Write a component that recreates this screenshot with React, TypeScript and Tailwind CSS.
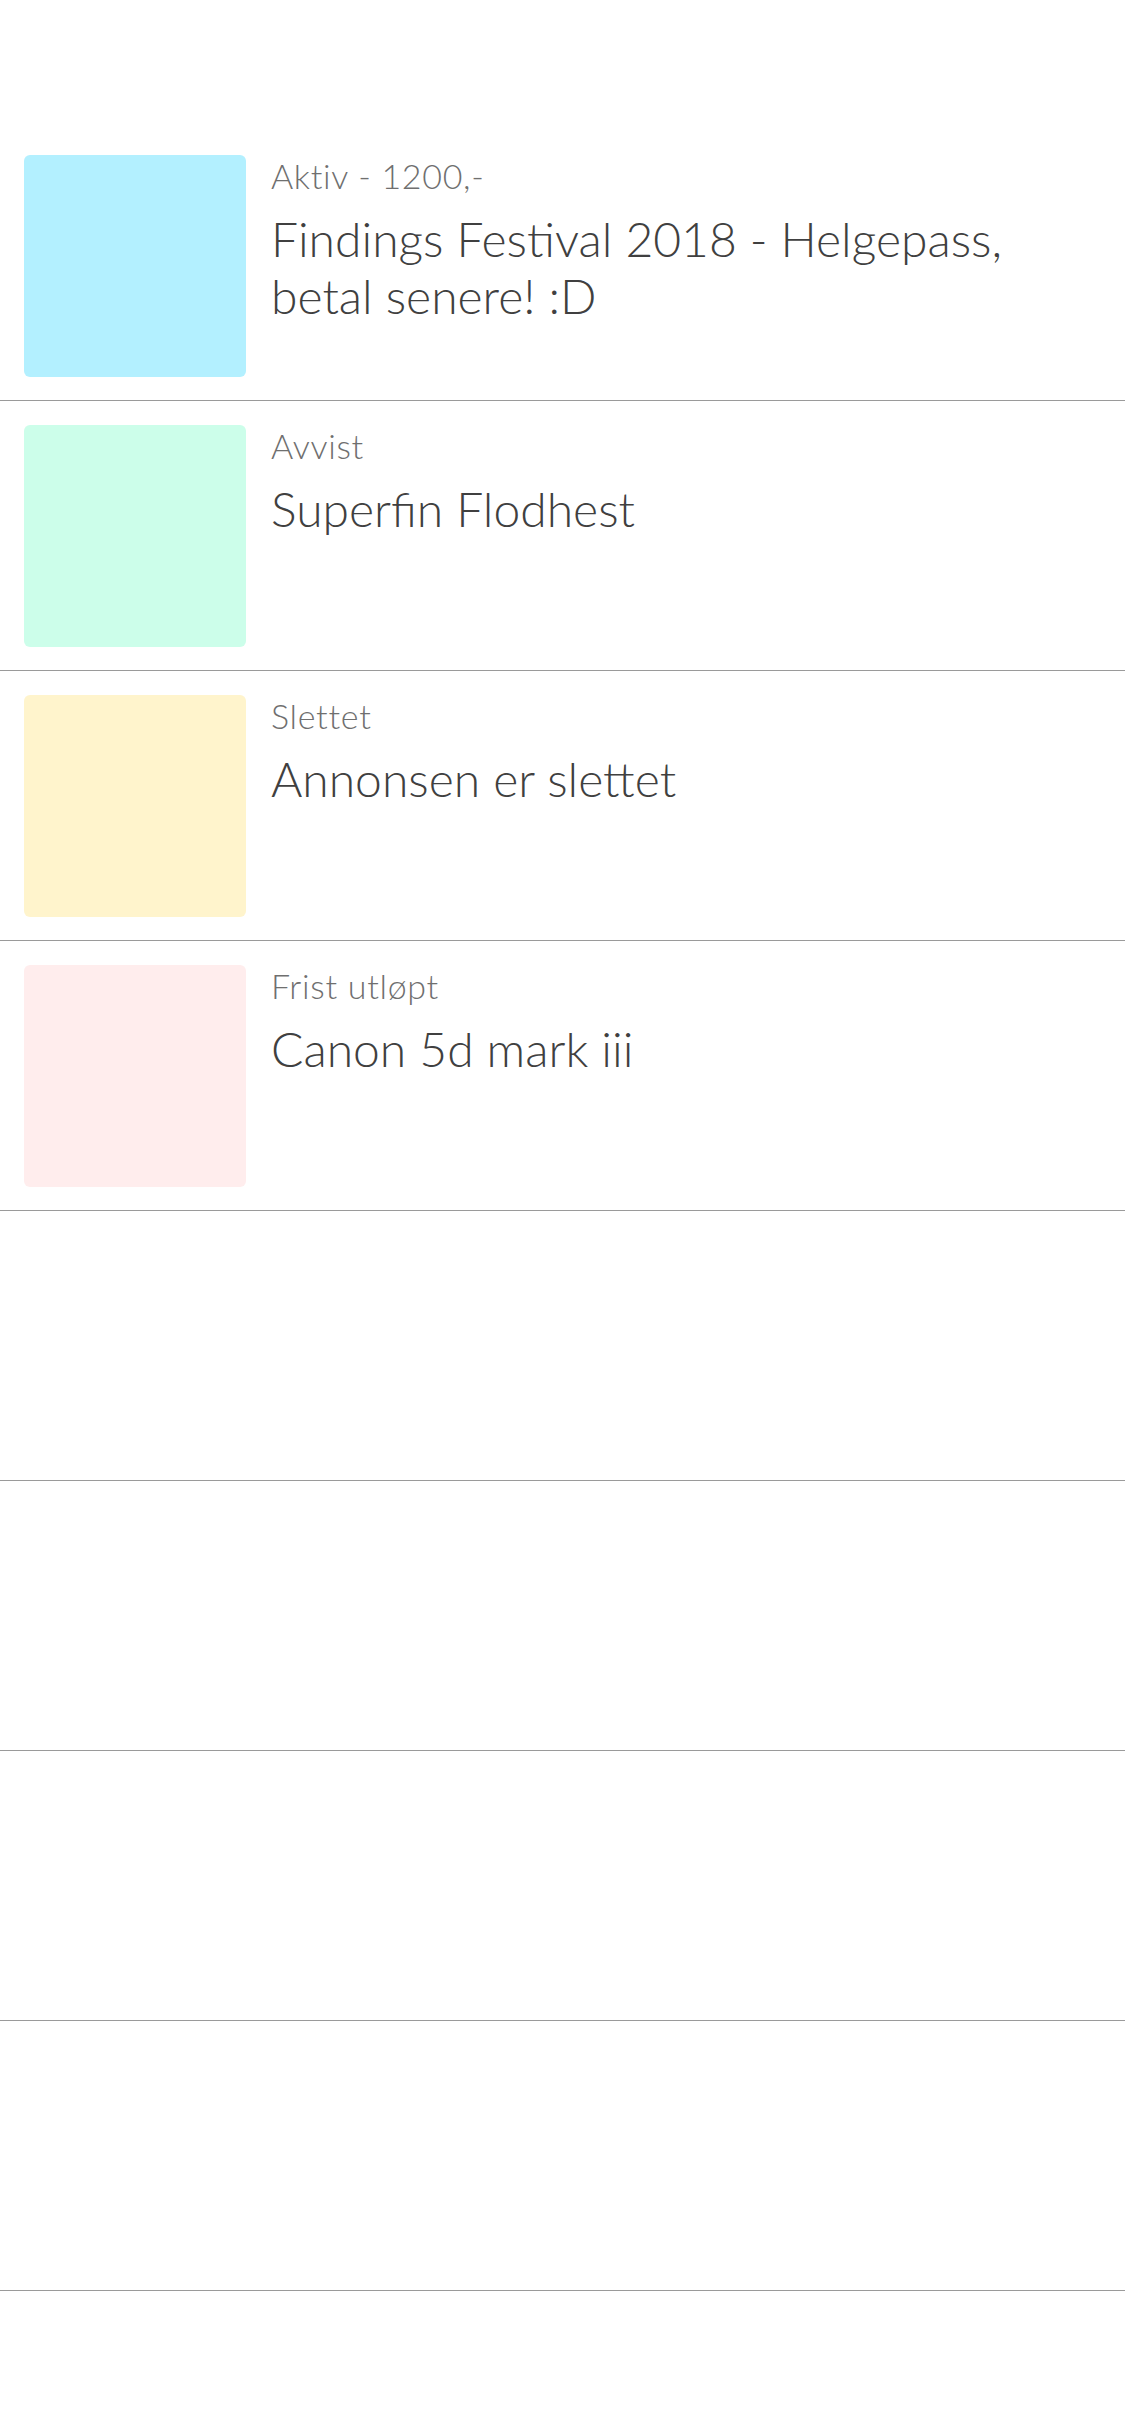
import React from "react";

type Ad = {
  id: string;
  status: string;
  title: string;
  color: string;
};

const ads: Ad[] = [
  { id: "1", status: "Aktiv - 1200,-", title: "Findings Festival 2018 - Helgepass, betal senere! :D", color: "bg-[#b3f0ff]" },
  { id: "2", status: "Avvist", title: "Superfin Flodhest", color: "bg-[#ccfeea]" },
  { id: "3", status: "Slettet", title: "Annonsen er slettet", color: "bg-[#fff4cc]" },
  { id: "4", status: "Frist utløpt", title: "Canon 5d mark iii", color: "bg-[#ffeded]" },
];

const AdRow = ({ ad }: { ad?: Ad }) => {
  return (
    <div className="h-[270px] border-b border-[#9a9a9a] flex items-start pl-[24px] pr-[24px] pt-[24px]">
      {ad && (
        <>
          <div className={`w-[222px] h-[222px] shrink-0 rounded-[6px] ${ad.color}`} />
          <div className="ml-[25px] flex-1 min-w-0">
            <div className="text-[34px] leading-[40px] tracking-[0.7px] font-light text-[#6f6f6f] mt-[1px]">
              {ad.status}
            </div>
            <div className="text-[48px] leading-[57px] tracking-[0px] font-light text-[#404040] mt-[14px]">
              {ad.title}
            </div>
          </div>
        </>
      )}
    </div>
  );
};

export default function App() {
  const rows: (Ad | undefined)[] = [...ads, undefined, undefined, undefined, undefined];

  return (
    <div className="w-[1125px] h-[2436px] bg-white overflow-hidden font-['Lato',sans-serif]">
      {/* top spacer */}
      <div className="h-[131px]" />

      {/* list */}
      <div>
        {rows.map((ad, i) => (
          <AdRow key={i} ad={ad} />
        ))}
      </div>
    </div>
  );
}
